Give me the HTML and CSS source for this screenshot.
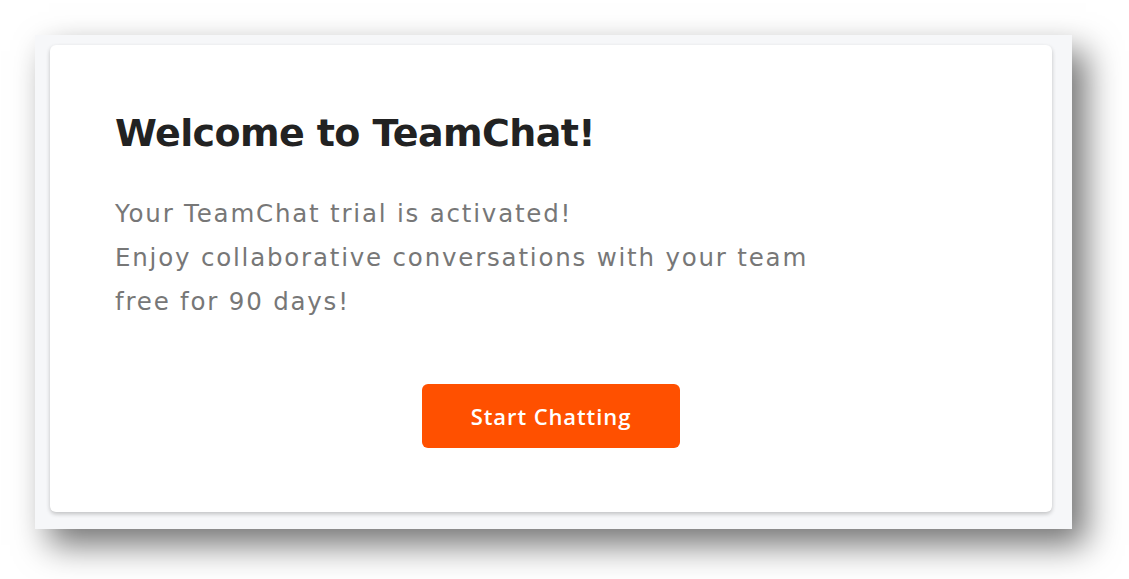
FILE: index.html
```html
<!DOCTYPE html>
<html lang="en">
<head>
  <meta charset="UTF-8">
  <meta name="viewport" content="width=device-width, initial-scale=1.0">
  <title>Welcome to TeamChat</title>
  <link rel="stylesheet" href="styles.css">
</head>
<body>
  <!-- Frame around the welcome card -->
  <div class="frame">
    <div class="card">
      <h1 class="title">Welcome to TeamChat!</h1>
      <p class="message">
        Your TeamChat trial is activated!<br>
        Enjoy collaborative conversations with your team<br>
        free for 90 days!
      </p>
      <div class="actions">
        <button class="start-btn" type="button">Start Chatting</button>
      </div>
    </div>
  </div>
</body>
</html>
```

FILE: styles.css
```css
* {
  margin: 0;
  padding: 0;
  box-sizing: border-box;
}

html,
body {
  background-color: #fff;
}

body {
  font-family: "DejaVu Sans", sans-serif;
  padding: 35px 0 50px 35px;
  min-height: 579px;
}

.frame {
  width: 1037px;
  height: 494px;
  background-color: #f6f7f9;
  padding: 10px 20px 17px 15px;
  box-shadow: 14px 16px 32px rgba(0, 0, 0, 0.55);
}

.card {
  height: 100%;
  background: #fff;
  border-radius: 6px;
  box-shadow: 0 2px 4px rgba(0, 0, 0, 0.22);
  padding: 64px 65px 0 65px;
  display: flex;
  flex-direction: column;
}

.title {
  font-size: 38px;
  line-height: 48px;
  font-weight: 600;
  color: #222;
  letter-spacing: -0.6px;
}

.message {
  margin-top: 35px;
  font-size: 24.5px;
  line-height: 44px;
  color: #777;
  letter-spacing: 1.8px;
}

.actions {
  margin-top: 60px;
  display: flex;
  justify-content: center;
  margin-left: -65px;
  margin-right: -65px;
}

.start-btn {
  width: 258px;
  height: 64px;
  border: none;
  border-radius: 6px;
  background-color: #ff5000;
  color: #fff;
  font-family: "Open Sans", sans-serif;
  font-size: 22px;
  font-weight: 600;
  letter-spacing: 0.9px;
  cursor: pointer;
}
```
